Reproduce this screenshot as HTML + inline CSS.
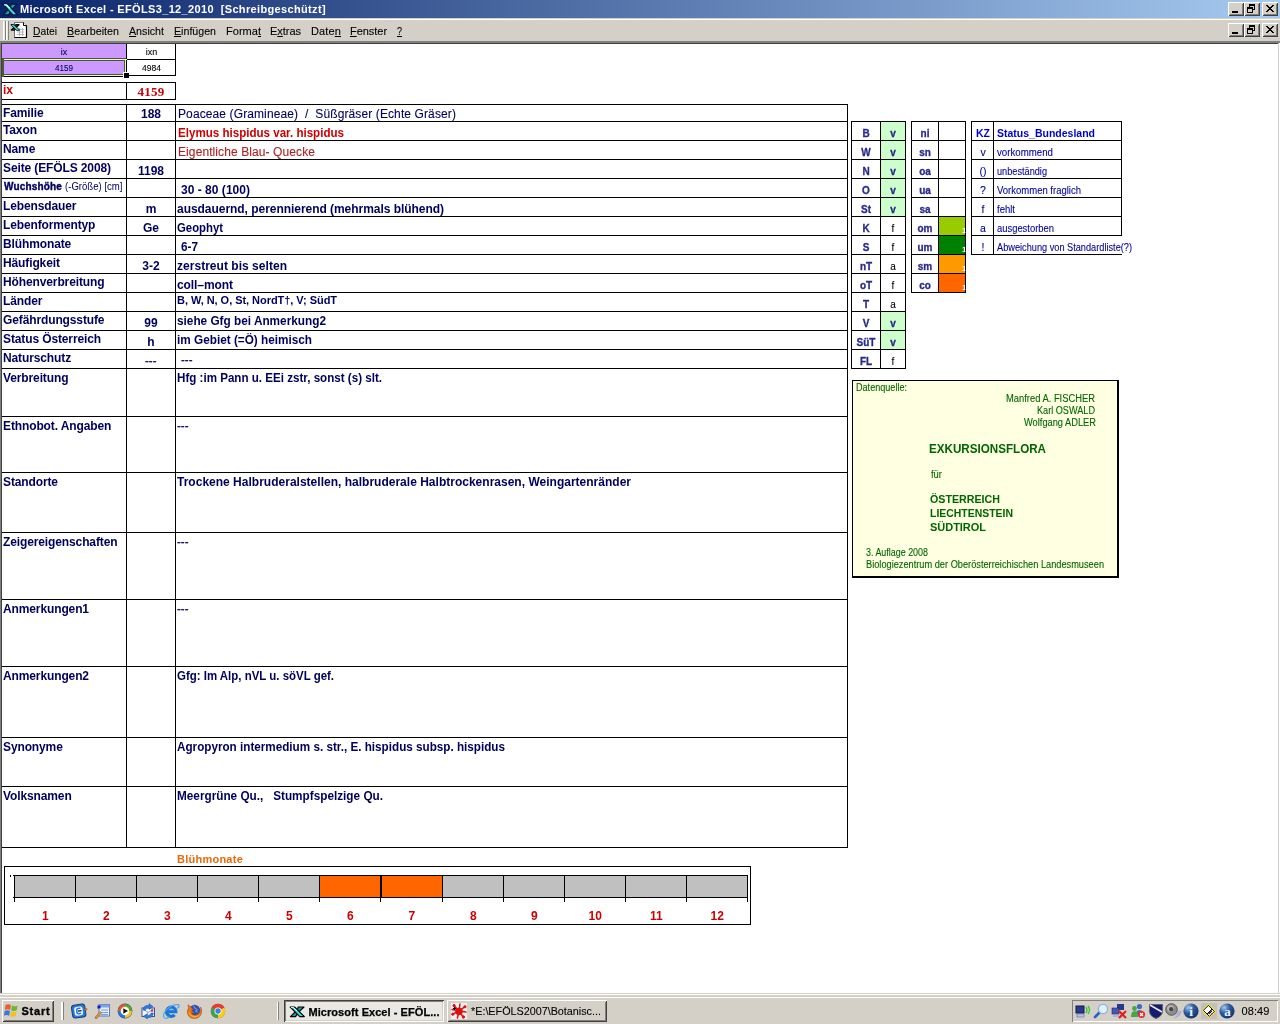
<!DOCTYPE html>
<html><head><meta charset="utf-8"><title>Microsoft Excel - EFÖLS3_12_2010 [Schreibgeschützt]</title>
<style>
html,body{margin:0;padding:0;}
body{width:1280px;height:1024px;position:relative;overflow:hidden;background:#fff;font-family:'Liberation Sans',sans-serif;}
body div,body span,body svg{position:absolute;}
body span{white-space:pre;line-height:normal;}
u{text-decoration:underline;text-underline-offset:1px;}
#tx{left:0;top:0;width:1280px;height:1024px;will-change:transform;}
</style></head><body>
<div style="left:0px;top:0px;width:1280px;height:18px;background:#0a246a;background:linear-gradient(90deg,#0a246a 0%,#a6caf0 100%);"></div>
<div style="left:0px;top:18px;width:1280px;height:1px;background:#d4d0c8;"></div>
<svg style="left:2px;top:2px" width="17" height="15" viewBox="0 0 17 13.6" preserveAspectRatio="none"><path d="M9.2 2 H15 L10.2 6.6 L8.4 4.6 Z M1.4 11.6 L6.2 6.9 L8.3 9 L6.6 11.6 Z" fill="#239a9a" stroke="#041a3c" stroke-width="1.1" stroke-linejoin="round"/><path d="M1.2 2 H5.6 L15.4 11.6 H10.8 Z" fill="#3fe0e0" stroke="#041a3c" stroke-width="1.1" stroke-linejoin="round"/><path d="M2 2.6 H4.6 L8 5.8" stroke="#e8ffff" stroke-width="1" fill="none"/></svg>
<div style="left:1228px;top:2px;width:16px;height:14px;background:#d4d0c8;box-shadow:inset 1px 1px 0 #fff,inset -1px -1px 0 #404040,inset 2px 2px 0 #d4d0c8,inset -2px -2px 0 #808080;"></div>
<div style="left:1232px;top:11px;width:6px;height:2px;background:#000;"></div>
<div style="left:1244px;top:2px;width:16px;height:14px;background:#d4d0c8;box-shadow:inset 1px 1px 0 #fff,inset -1px -1px 0 #404040,inset 2px 2px 0 #d4d0c8,inset -2px -2px 0 #808080;"></div>
<div style="left:1249px;top:4px;width:6px;height:6px;background:transparent;border:1px solid #000;border-top-width:2px;box-sizing:border-box;"></div>
<div style="left:1247px;top:7px;width:6px;height:6px;background:#d4d0c8;border:1px solid #000;border-top-width:2px;box-sizing:border-box;"></div>
<div style="left:1262px;top:2px;width:16px;height:14px;background:#d4d0c8;box-shadow:inset 1px 1px 0 #fff,inset -1px -1px 0 #404040,inset 2px 2px 0 #d4d0c8,inset -2px -2px 0 #808080;"></div>
<svg style="left:1266px;top:5px" width="8" height="7" viewBox="0 0 8 7" shape-rendering="crispEdges"><path d="M0 0h2v1h1v1h2v-1h1v-1h2v1h-1v1h-1v1h-1v1h1v1h1v1h1v1h-2v-1h-1v-1h-2v1h-1v1h-2v-1h1v-1h1v-1h1v-1h-1v-1h-1v-1h-1z" fill="#000"/></svg>
<div style="left:0px;top:19px;width:1280px;height:22px;background:#d4d0c8;"></div>
<div style="left:0px;top:19px;width:1280px;height:1px;background:#fff;"></div>
<div style="left:0px;top:41px;width:1280px;height:1px;background:#808080;"></div>
<div style="left:0px;top:42px;width:1280px;height:1px;background:#808080;"></div>
<div style="left:3px;top:21px;width:1px;height:19px;background:#fff;"></div>
<div style="left:4px;top:21px;width:1px;height:19px;background:#ece9e2;"></div>
<div style="left:5px;top:21px;width:1px;height:19px;background:#808080;"></div>
<div style="left:6px;top:21px;width:1px;height:19px;background:#fff;"></div>
<div style="left:7px;top:21px;width:1px;height:19px;background:#ece9e2;"></div>
<div style="left:8px;top:21px;width:1px;height:19px;background:#808080;"></div>
<svg style="left:10px;top:21px" width="18" height="18" viewBox="0 0 18 18"><path d="M4.5 1.5 H13.5 L16.5 4.5 V16.5 H4.5 Z" fill="#fff" stroke="#707070" stroke-width="1"/><path d="M16.5 4.5 V16.5 H4.5" fill="none" stroke="#000" stroke-width="1.2"/><path d="M13.5 1.5 V4.5 H16.5" fill="#fff" stroke="#000" stroke-width="1"/><path d="M7 8.5h7M7 11h7M7 13.5h7M9.5 7v8M12.5 7v8" stroke="#b4b4b4" stroke-width="1"/><g transform="translate(0.6,2.6) scale(0.56)"><path d="M9.2 2 H15 L10.2 6.6 L8.4 4.6 Z M1.4 11.6 L6.2 6.9 L8.3 9 L6.6 11.6 Z" fill="#239a9a" stroke="#000" stroke-width="2.4" stroke-linejoin="round"/><path d="M1.2 2 H5 L15.2 11.6 H11 Z" fill="#3fe0e0" stroke="#000" stroke-width="2.4" stroke-linejoin="round"/><path d="M1.2 2 H5 L15.2 11.6 H11 Z" fill="#3fe0e0"/></g></svg>
<div style="left:1228px;top:23px;width:16px;height:14px;background:#d4d0c8;box-shadow:inset 1px 1px 0 #fff,inset -1px -1px 0 #404040,inset 2px 2px 0 #d4d0c8,inset -2px -2px 0 #808080;"></div>
<div style="left:1232px;top:32px;width:6px;height:2px;background:#000;"></div>
<div style="left:1244px;top:23px;width:16px;height:14px;background:#d4d0c8;box-shadow:inset 1px 1px 0 #fff,inset -1px -1px 0 #404040,inset 2px 2px 0 #d4d0c8,inset -2px -2px 0 #808080;"></div>
<div style="left:1249px;top:25px;width:6px;height:6px;background:transparent;border:1px solid #000;border-top-width:2px;box-sizing:border-box;"></div>
<div style="left:1247px;top:28px;width:6px;height:6px;background:#d4d0c8;border:1px solid #000;border-top-width:2px;box-sizing:border-box;"></div>
<div style="left:1262px;top:23px;width:16px;height:14px;background:#d4d0c8;box-shadow:inset 1px 1px 0 #fff,inset -1px -1px 0 #404040,inset 2px 2px 0 #d4d0c8,inset -2px -2px 0 #808080;"></div>
<svg style="left:1266px;top:26px" width="8" height="7" viewBox="0 0 8 7" shape-rendering="crispEdges"><path d="M0 0h2v1h1v1h2v-1h1v-1h2v1h-1v1h-1v1h-1v1h1v1h1v1h1v1h-2v-1h-1v-1h-2v1h-1v1h-2v-1h1v-1h1v-1h1v-1h-1v-1h-1v-1h-1z" fill="#000"/></svg>
<div style="left:0px;top:43px;width:1280px;height:950px;background:#fff;"></div>
<div style="left:0px;top:43px;width:1280px;height:1px;background:#404040;"></div>
<div style="left:0px;top:43px;width:1px;height:950px;background:#808080;"></div>
<div style="left:1px;top:44px;width:1px;height:949px;background:#404040;"></div>
<div style="left:1278px;top:43px;width:1px;height:950px;background:#d4d0c8;"></div>
<div style="left:1279px;top:43px;width:1px;height:950px;background:#fff;"></div>
<div style="left:2px;top:44px;width:124px;height:15px;background:#cc99ff;"></div>
<div style="left:2px;top:60px;width:124px;height:15px;background:#cc99ff;"></div>
<div style="left:2px;top:59px;width:174px;height:1px;background:#000;"></div>
<div style="left:2px;top:75px;width:174px;height:1px;background:#000;"></div>
<div style="left:126px;top:44px;width:1px;height:32px;background:#000;"></div>
<div style="left:175px;top:44px;width:1px;height:32px;background:#000;"></div>
<div style="left:2px;top:58px;width:124px;height:1px;background:#4a5a38;"></div>
<div style="left:2px;top:59px;width:125px;height:1px;background:#eef4d6;"></div>
<div style="left:2px;top:60px;width:123px;height:1px;background:#4a5a38;"></div>
<div style="left:2px;top:74px;width:122px;height:1px;background:#4a5a38;"></div>
<div style="left:2px;top:75px;width:122px;height:1px;background:#eef4d6;"></div>
<div style="left:2px;top:76px;width:122px;height:1px;background:#000;"></div>
<div style="left:2px;top:58px;width:2px;height:19px;background:#4a5a38;"></div>
<div style="left:124px;top:60px;width:1px;height:13px;background:#4a5a38;"></div>
<div style="left:125px;top:60px;width:1px;height:13px;background:#eef4d6;"></div>
<div style="left:123px;top:72px;width:6px;height:6px;background:#fff;"></div>
<div style="left:124px;top:73px;width:5px;height:5px;background:#000;"></div>
<div style="left:2px;top:82px;width:174px;height:1px;background:#000;"></div>
<div style="left:2px;top:99px;width:174px;height:1px;background:#000;"></div>
<div style="left:126px;top:82px;width:1px;height:18px;background:#000;"></div>
<div style="left:175px;top:82px;width:1px;height:18px;background:#000;"></div>
<div style="left:2px;top:104px;width:846px;height:1px;background:#000;"></div>
<div style="left:2px;top:121px;width:846px;height:1px;background:#000;"></div>
<div style="left:2px;top:140px;width:846px;height:1px;background:#000;"></div>
<div style="left:2px;top:159px;width:846px;height:1px;background:#000;"></div>
<div style="left:2px;top:178px;width:846px;height:1px;background:#000;"></div>
<div style="left:2px;top:197px;width:846px;height:1px;background:#000;"></div>
<div style="left:2px;top:216px;width:846px;height:1px;background:#000;"></div>
<div style="left:2px;top:235px;width:846px;height:1px;background:#000;"></div>
<div style="left:2px;top:254px;width:846px;height:1px;background:#000;"></div>
<div style="left:2px;top:273px;width:846px;height:1px;background:#000;"></div>
<div style="left:2px;top:292px;width:846px;height:1px;background:#000;"></div>
<div style="left:2px;top:311px;width:846px;height:1px;background:#000;"></div>
<div style="left:2px;top:330px;width:846px;height:1px;background:#000;"></div>
<div style="left:2px;top:349px;width:846px;height:1px;background:#000;"></div>
<div style="left:2px;top:368px;width:846px;height:1px;background:#000;"></div>
<div style="left:2px;top:416px;width:846px;height:1px;background:#000;"></div>
<div style="left:2px;top:472px;width:846px;height:1px;background:#000;"></div>
<div style="left:2px;top:532px;width:846px;height:1px;background:#000;"></div>
<div style="left:2px;top:599px;width:846px;height:1px;background:#000;"></div>
<div style="left:2px;top:666px;width:846px;height:1px;background:#000;"></div>
<div style="left:2px;top:737px;width:846px;height:1px;background:#000;"></div>
<div style="left:2px;top:786px;width:846px;height:1px;background:#000;"></div>
<div style="left:2px;top:847px;width:846px;height:1px;background:#000;"></div>
<div style="left:126px;top:104px;width:1px;height:744px;background:#000;"></div>
<div style="left:175px;top:104px;width:1px;height:744px;background:#000;"></div>
<div style="left:847px;top:104px;width:1px;height:744px;background:#000;"></div>
<div style="left:851px;top:121px;width:55px;height:1px;background:#000;"></div>
<div style="left:851px;top:140px;width:55px;height:1px;background:#000;"></div>
<div style="left:851px;top:159px;width:55px;height:1px;background:#000;"></div>
<div style="left:851px;top:178px;width:55px;height:1px;background:#000;"></div>
<div style="left:851px;top:197px;width:55px;height:1px;background:#000;"></div>
<div style="left:851px;top:216px;width:55px;height:1px;background:#000;"></div>
<div style="left:851px;top:235px;width:55px;height:1px;background:#000;"></div>
<div style="left:851px;top:254px;width:55px;height:1px;background:#000;"></div>
<div style="left:851px;top:273px;width:55px;height:1px;background:#000;"></div>
<div style="left:851px;top:292px;width:55px;height:1px;background:#000;"></div>
<div style="left:851px;top:311px;width:55px;height:1px;background:#000;"></div>
<div style="left:851px;top:330px;width:55px;height:1px;background:#000;"></div>
<div style="left:851px;top:349px;width:55px;height:1px;background:#000;"></div>
<div style="left:851px;top:368px;width:55px;height:1px;background:#000;"></div>
<div style="left:851px;top:121px;width:1px;height:248px;background:#000;"></div>
<div style="left:880px;top:121px;width:1px;height:248px;background:#000;"></div>
<div style="left:905px;top:121px;width:1px;height:248px;background:#000;"></div>
<div style="left:881px;top:122px;width:24px;height:18px;background:#ccffcc;"></div>
<div style="left:881px;top:141px;width:24px;height:18px;background:#ccffcc;"></div>
<div style="left:881px;top:160px;width:24px;height:18px;background:#ccffcc;"></div>
<div style="left:881px;top:179px;width:24px;height:18px;background:#ccffcc;"></div>
<div style="left:881px;top:198px;width:24px;height:18px;background:#ccffcc;"></div>
<div style="left:881px;top:312px;width:24px;height:18px;background:#ccffcc;"></div>
<div style="left:881px;top:331px;width:24px;height:18px;background:#ccffcc;"></div>
<div style="left:911px;top:121px;width:55px;height:1px;background:#000;"></div>
<div style="left:911px;top:140px;width:55px;height:1px;background:#000;"></div>
<div style="left:911px;top:159px;width:55px;height:1px;background:#000;"></div>
<div style="left:911px;top:178px;width:55px;height:1px;background:#000;"></div>
<div style="left:911px;top:197px;width:55px;height:1px;background:#000;"></div>
<div style="left:911px;top:216px;width:55px;height:1px;background:#000;"></div>
<div style="left:911px;top:235px;width:55px;height:1px;background:#000;"></div>
<div style="left:911px;top:254px;width:55px;height:1px;background:#000;"></div>
<div style="left:911px;top:273px;width:55px;height:1px;background:#000;"></div>
<div style="left:911px;top:292px;width:55px;height:1px;background:#000;"></div>
<div style="left:911px;top:121px;width:1px;height:172px;background:#000;"></div>
<div style="left:938px;top:121px;width:1px;height:172px;background:#000;"></div>
<div style="left:965px;top:121px;width:1px;height:172px;background:#000;"></div>
<div style="left:939px;top:217px;width:26px;height:18px;background:#99cc00;"></div>
<div style="left:939px;top:236px;width:26px;height:18px;background:#008000;"></div>
<div style="left:939px;top:255px;width:26px;height:18px;background:#ff9900;"></div>
<div style="left:939px;top:274px;width:26px;height:18px;background:#ff6600;"></div>
<div style="left:971px;top:121px;width:151px;height:1px;background:#000;"></div>
<div style="left:971px;top:140px;width:151px;height:1px;background:#000;"></div>
<div style="left:971px;top:159px;width:151px;height:1px;background:#000;"></div>
<div style="left:971px;top:178px;width:151px;height:1px;background:#000;"></div>
<div style="left:971px;top:197px;width:151px;height:1px;background:#000;"></div>
<div style="left:971px;top:216px;width:151px;height:1px;background:#000;"></div>
<div style="left:971px;top:235px;width:151px;height:1px;background:#000;"></div>
<div style="left:971px;top:254px;width:151px;height:1px;background:#000;"></div>
<div style="left:971px;top:121px;width:1px;height:134px;background:#000;"></div>
<div style="left:993px;top:121px;width:1px;height:134px;background:#000;"></div>
<div style="left:1121px;top:121px;width:1px;height:115px;background:#000;"></div>
<div style="left:852px;top:380px;width:267px;height:198px;background:#ffffe1;border:1px solid #000;border-right-width:2px;border-bottom-width:2px;box-sizing:border-box;"></div>
<div style="left:4px;top:866px;width:747px;height:59px;background:#fff;border:1px solid #000;box-sizing:border-box;"></div>
<div style="left:14px;top:875px;width:61px;height:23px;background:#c0c0c0;"></div>
<div style="left:75px;top:875px;width:61px;height:23px;background:#c0c0c0;"></div>
<div style="left:136px;top:875px;width:61px;height:23px;background:#c0c0c0;"></div>
<div style="left:197px;top:875px;width:61px;height:23px;background:#c0c0c0;"></div>
<div style="left:258px;top:875px;width:61px;height:23px;background:#c0c0c0;"></div>
<div style="left:319px;top:875px;width:61px;height:23px;background:#ff6600;"></div>
<div style="left:380px;top:875px;width:62px;height:23px;background:#ff6600;"></div>
<div style="left:442px;top:875px;width:61px;height:23px;background:#c0c0c0;"></div>
<div style="left:503px;top:875px;width:61px;height:23px;background:#c0c0c0;"></div>
<div style="left:564px;top:875px;width:61px;height:23px;background:#c0c0c0;"></div>
<div style="left:625px;top:875px;width:61px;height:23px;background:#c0c0c0;"></div>
<div style="left:686px;top:875px;width:61px;height:23px;background:#c0c0c0;"></div>
<div style="left:13px;top:875px;width:735px;height:1px;background:#000;"></div>
<div style="left:13px;top:897px;width:735px;height:1px;background:#000;"></div>
<div style="left:14px;top:875px;width:1px;height:27px;background:#000;"></div>
<div style="left:75px;top:875px;width:1px;height:27px;background:#000;"></div>
<div style="left:136px;top:875px;width:1px;height:27px;background:#000;"></div>
<div style="left:197px;top:875px;width:1px;height:27px;background:#000;"></div>
<div style="left:258px;top:875px;width:1px;height:27px;background:#000;"></div>
<div style="left:319px;top:875px;width:1px;height:27px;background:#000;"></div>
<div style="left:380px;top:875px;width:1px;height:27px;background:#000;"></div>
<div style="left:442px;top:875px;width:1px;height:27px;background:#000;"></div>
<div style="left:503px;top:875px;width:1px;height:27px;background:#000;"></div>
<div style="left:564px;top:875px;width:1px;height:27px;background:#000;"></div>
<div style="left:625px;top:875px;width:1px;height:27px;background:#000;"></div>
<div style="left:686px;top:875px;width:1px;height:27px;background:#000;"></div>
<div style="left:747px;top:875px;width:1px;height:27px;background:#000;"></div>
<div style="left:10px;top:875px;width:1px;height:2px;background:#000;"></div>
<div style="left:381px;top:875px;width:1px;height:23px;background:#000;"></div>
<div style="left:442px;top:875px;width:1px;height:23px;background:#000;"></div>
<div style="left:0px;top:993px;width:1280px;height:31px;background:#d4d0c8;"></div>
<div style="left:0px;top:994px;width:1280px;height:1px;background:#fff;"></div>
<div style="left:0px;top:997px;width:1280px;height:1px;background:#fff;"></div>
<div style="left:2px;top:1000px;width:52px;height:22px;background:#d4d0c8;box-shadow:inset 1px 1px 0 #fff,inset -1px -1px 0 #404040,inset 2px 2px 0 #d4d0c8,inset -2px -2px 0 #808080;"></div>
<svg style="left:4px;top:1002px" width="16" height="16" viewBox="0 0 16 16"><path d="M1.5 3.2 Q4 1.5 7 3.2 L6.2 8 Q3.6 6.6 0.8 8 Z" fill="#e8602c"/><path d="M8 3.6 Q10.6 5 13.6 3.4 L12.8 8.2 Q10 9.6 7.2 8.4 Z" fill="#6cb82c"/><path d="M0.6 9 Q3.4 7.6 6 9 L5.2 13.8 Q2.6 12.4 0 13.8 Z" fill="#3c78d8"/><path d="M7 9.4 Q9.8 10.6 12.6 9.2 L11.8 14 Q9 15.4 6.2 14.2 Z" fill="#f4c020"/></svg>
<div style="left:61px;top:1002px;width:2px;height:18px;background:#fff;"></div>
<div style="left:63px;top:1002px;width:1px;height:18px;background:#808080;"></div>
<svg style="left:71px;top:1003px" width="17" height="16" viewBox="0 0 17 16"><g transform="rotate(-8 8 8)"><rect x="1" y="1.5" width="13.4" height="13" rx="2.8" fill="#2a78d0" stroke="#0c3c94" stroke-width="1"/><rect x="3.4" y="3.6" width="8.4" height="8.8" rx="2.2" fill="#eaf4ff"/><path d="M9.8 5.4 H7.4 Q5.8 5.4 5.8 7 V9 Q5.8 10.6 7.4 10.6 H9.8" stroke="#2a78d0" stroke-width="1.5" fill="none"/><path d="M7 8 H10.6" stroke="#101830" stroke-width="1.3"/></g><circle cx="15" cy="6.2" r="1.3" fill="#d8601c"/></svg>
<svg style="left:94px;top:1003px" width="17" height="16" viewBox="0 0 17 16"><rect x="5" y="1.5" width="10.5" height="11.5" fill="#e8f0fc" stroke="#5878c0"/><rect x="5" y="1.5" width="10.5" height="3" fill="#7ca4e4"/><rect x="3.5" y="2.5" width="3" height="3" fill="#1418b8"/><path d="M7 7h7M7 9.5h7M7 11.5h7" stroke="#7898d8"/><path d="M1 14.5 L6 8.5 L7.6 9.8 L2.6 15.6z" fill="#e8963c" stroke="#a05818" stroke-width=".6"/><path d="M.6 15.8 L1.6 13.8 L3 15z" fill="#807060"/></svg>
<svg style="left:117px;top:1003px" width="17" height="16" viewBox="0 0 17 16"><circle cx="8" cy="8" r="7.4" fill="#1c4c9c"/><path d="M8 8 L8 .9 A7.1 7.1 0 0 0 .9 8z" fill="#e85c20"/><path d="M8 8 L15.1 8 A7.1 7.1 0 0 0 8 .9z" fill="#58a828"/><path d="M8 8 L8 15.1 A7.1 7.1 0 0 0 15.1 8z" fill="#f0c418"/><path d="M8 8 L.9 8 A7.1 7.1 0 0 0 8 15.1z" fill="#2c74d8"/><circle cx="8" cy="8" r="4.3" fill="#fff"/><path d="M6.3 5.2 L11 8 L6.3 10.8z" fill="#101010"/></svg>
<svg style="left:140px;top:1003px" width="17" height="16" viewBox="0 0 17 16"><rect x="2" y="5" width="12.5" height="8.5" fill="#f4f6fc" stroke="#3450a0" stroke-width="1"/><path d="M2 5 l6.2 4.6 6.3-4.6" stroke="#8094c8" fill="none"/><rect x="11" y="6.5" width="2.2" height="2.2" fill="#d83020"/><path d="M3 7 Q3.5 2 9 2.4 L9 .6 L13 3.6 L9 6.4 L9 4.6 Q5.5 4.4 5.4 7.4z" fill="#2c7ce0" stroke="#1c4ca8" stroke-width=".5"/><path d="M13.4 10 Q13 15 7.4 14.6 L7.4 16 L3.4 13.2 L7.4 10.6 L7.4 12.4 Q10.8 12.6 11 10z" fill="#2c7ce0" stroke="#1c4ca8" stroke-width=".5"/></svg>
<svg style="left:163px;top:1003px" width="17" height="16" viewBox="0 0 17 16"><path d="M4.4 8.6 H12.8 A4.6 4.6 0 1 0 11.6 11.8" stroke="#1c74d4" stroke-width="3.3" fill="none"/><path d="M5 7.4 H12 A4 4 0 0 0 5 7.4" fill="#58b4f8" opacity=".55"/><path d="M1.2 14.6 C-1.5 10 7 1 15.6 1.6 C17 3 15 5 14 5.4" stroke="#4ca8f0" stroke-width="1.2" fill="none"/><path d="M1.2 14.6 C3 16 5.6 14.6 6.6 13.8" stroke="#4ca8f0" stroke-width="1.2" fill="none"/></svg>
<svg style="left:186px;top:1003px" width="17" height="16" viewBox="0 0 17 16"><circle cx="8.6" cy="7.4" r="5.6" fill="#3050b4"/><path d="M7 3 q2 .5 2 2.5 q1.6 0 2.4 1.4 l-2 1 q.5 1.5 2.4 1" stroke="#80a8e8" stroke-width="1" fill="none"/><path d="M2.2 1.6 Q1.8 3.6 2.6 4.8 Q.4 8 1.8 11.4 Q3.6 15.6 8.4 15.6 Q13.8 15.4 15.4 10.4 Q16.4 6.6 14.6 4 Q15.2 7.4 13.6 9.6 Q12 12.4 8.6 12.2 Q5.6 11.8 5.2 9.4 Q6.6 10.4 8.2 9.4 Q6 8.8 5.6 7 Q6.8 7 7.4 6.2 Q5 5.4 4.6 3.6 Q3.2 3.4 2.2 1.6z" fill="#e8741c" stroke="#b04808" stroke-width=".5"/><path d="M2.6 9 Q3.6 13.6 8.4 14.4 Q12.6 14.4 14.4 10.4 Q12.4 13 8.6 13 Q5 12.8 3.8 9.6z" fill="#f8b428"/></svg>
<svg style="left:209.5px;top:1003px" width="17" height="16" viewBox="0 0 17 16"><circle cx="8" cy="8" r="7.3" fill="#e43c30"/><path d="M8 8 L1.7 4.4 A7.3 7.3 0 0 0 8 15.3 z" fill="#3ca44c"/><path d="M8 8 L8 15.3 A7.3 7.3 0 0 0 14.3 4.4 z" fill="#f8cc1c"/><path d="M8 4.4 H14.3 A7.3 7.3 0 0 0 1.7 4.4z" fill="#e43c30"/><circle cx="8" cy="8" r="3.5" fill="#fff"/><circle cx="8" cy="8" r="2.7" fill="#3c80e4"/></svg>
<div style="left:277px;top:1002px;width:1px;height:18px;background:#fff;"></div>
<div style="left:278px;top:1002px;width:1px;height:18px;background:#808080;"></div>
<div style="left:284px;top:1000px;width:160px;height:22px;background:#eae8e3;box-shadow:inset 1px 1px 0 #404040,inset -1px -1px 0 #fff,inset 2px 2px 0 #808080,inset -2px -2px 0 #d4d0c8;"></div>
<svg style="left:289px;top:1005px" width="17" height="14" viewBox="0 0 17 14"><path d="M9.2 2 H15 L10.2 6.6 L8.4 4.6 Z M1.4 11.6 L6.2 6.9 L8.3 9 L6.6 11.6 Z" fill="#239a9a" stroke="#000" stroke-width="1.1" stroke-linejoin="round"/><path d="M1.2 2 H5.6 L15.4 11.6 H10.8 Z" fill="#3fe0e0" stroke="#000" stroke-width="1.1" stroke-linejoin="round"/><path d="M2 2.6 H4.6 L8 5.8" stroke="#e8ffff" stroke-width="1" fill="none"/></svg>
<div style="left:447px;top:1000px;width:160px;height:22px;background:#d4d0c8;box-shadow:inset 1px 1px 0 #fff,inset -1px -1px 0 #404040,inset 2px 2px 0 #d4d0c8,inset -2px -2px 0 #808080;"></div>
<svg style="left:451px;top:1003px" width="16" height="16" viewBox="0 0 16 16"><rect width="16" height="16" fill="#f0f0f0"/><g fill="#e01010" stroke="#e01010"><circle cx="8" cy="8.4" r="3.4"/><path d="M8 8 L3 2.4 M8 8 L9 1 M8 8 L14 3.6 M8 8 L15 9 M8 8 L12.4 14.4 M8 8 L6.4 15 M8 8 L1.4 11.4 M8 8 L1 6.4" stroke-width="1.5" stroke-linecap="round"/><circle cx="3" cy="2.6" r="1.1"/><circle cx="14" cy="3.8" r="1.1"/><circle cx="12.4" cy="14" r="1.2"/><circle cx="1.8" cy="11.2" r="1.1"/></g><rect x="3" y="4" width="1" height="3" fill="#000"/><rect x="2" y="5" width="3" height="1" fill="#000"/></svg>
<div style="left:1072px;top:1000px;width:206px;height:22px;background:#d4d0c8;box-shadow:inset 1px 1px 0 #808080,inset -1px -1px 0 #fff;"></div>
<svg style="left:1075px;top:1003px" width="17" height="16" viewBox="0 0 17 16"><rect x="1" y="3" width="8" height="7" fill="#28388c" stroke="#101848"/><rect x="2" y="11" width="7" height="3" fill="#b8c4ec" stroke="#5868a8" stroke-width=".6"/><path d="M11 4 q2 3 0 6 M13 3 q3 4 0 8" stroke="#38c828" stroke-width="1.3" fill="none"/></svg>
<svg style="left:1093px;top:1003px" width="16" height="16" viewBox="0 0 16 16"><path d="M2 14 L7 9" stroke="#2c5cc8" stroke-width="2.6" stroke-linecap="round"/><circle cx="10" cy="6" r="4.6" fill="#e4f0fc" stroke="#8cb4e8" stroke-width="1.4"/></svg>
<svg style="left:1111px;top:1003px" width="16" height="16" viewBox="0 0 16 16"><rect x="6" y="1" width="7" height="6" fill="#28388c"/><rect x="1" y="5" width="7" height="6" fill="#4858b0" stroke="#182868" stroke-width=".6"/><rect x="2" y="12" width="6" height="2" fill="#a8b4e0"/><path d="M8 8 L15 15 M15 8 L8 15" stroke="#e02020" stroke-width="2.2"/></svg>
<svg style="left:1130px;top:1003px" width="16" height="16" viewBox="0 0 16 16"><circle cx="9.5" cy="3.5" r="2.6" fill="#3c6cc0"/><path d="M5.5 13 q0-6 4-6 q4 0 4 6z" fill="#3c6cc0"/><circle cx="4.5" cy="5.5" r="2.4" fill="#48a848"/><path d="M1 14 q0-6 3.6-6 q3.6 0 3.6 6z" fill="#48a848"/><circle cx="11.5" cy="11.5" r="3.6" fill="#e02828"/><path d="M10 10 l3 3 M13 10 l-3 3" stroke="#fff" stroke-width="1.3"/></svg>
<svg style="left:1148px;top:1003px" width="16" height="16" viewBox="0 0 16 16"><path d="M1.5 1.5 H14.5 V8 Q14.5 13 8 15.5 Q1.5 13 1.5 8z" fill="#141c70" stroke="#606060"/><path d="M2 2 L14 9" stroke="#e8e8f4" stroke-width="1.6"/></svg>
<svg style="left:1165px;top:1003px" width="17" height="16" viewBox="0 0 17 16"><circle cx="6.5" cy="6.5" r="5.8" fill="#8c8c8c" stroke="#585858"/><circle cx="5.6" cy="5.6" r="3.4" fill="#b8b8b8"/><circle cx="6.2" cy="6.2" r="2.2" fill="#484848"/><path d="M10.5 12.5 q3-1.4 4-4.6 M9 15 q5.4-1.4 7-7" stroke="#a8a8dc" stroke-width="1.2" fill="none"/></svg>
<svg style="left:1183px;top:1003px" width="16" height="16" viewBox="0 0 16 16"><defs><radialGradient id="gi" cx=".32" cy=".28" r=".8"><stop offset="0" stop-color="#a8c8ec"/><stop offset=".45" stop-color="#2c5c9c"/><stop offset="1" stop-color="#10306c"/></radialGradient></defs><circle cx="8" cy="8" r="7.6" fill="url(#gi)"/><text x="8.2" y="13" text-anchor="middle" font-family="Liberation Serif" font-weight="bold" font-size="13.5" fill="#e8f4ff">i</text></svg>
<svg style="left:1201px;top:1003px" width="16" height="16" viewBox="0 0 16 16"><rect width="16" height="16" fill="#c4c0b8"/><path d="M.8 7.4 L7.6 .8 L15.2 8.4 L8.4 15.2z" fill="#f4ec28"/><path d="M2.4 7.4 L7.4 2.4 L11 6 L6 11z" fill="#fff" stroke="#000" stroke-width=".9"/><path d="M6 11 L11 6 L13.4 8.4 L8.4 13.4z" fill="#fff" stroke="#000" stroke-width=".9"/><path d="M7.6 11 L11 7.6" stroke="#000" stroke-width="1.2"/><rect x="10" y="10.4" width="1.4" height="1.4" fill="#e03030"/></svg>
<svg style="left:1219px;top:1003px" width="16" height="16" viewBox="0 0 16 16"><defs><radialGradient id="ga" cx=".32" cy=".28" r=".8"><stop offset="0" stop-color="#a8c8ec"/><stop offset=".45" stop-color="#2c5c9c"/><stop offset="1" stop-color="#10306c"/></radialGradient></defs><circle cx="8" cy="8" r="7.6" fill="url(#ga)"/><text x="8.6" y="12.6" text-anchor="middle" font-family="Liberation Serif" font-weight="bold" font-size="13" fill="#e8f4ff">a</text></svg>
<div id="tx">
<span style="left:20.00px;top:3.00px;color:#fff;font:bold 11px 'Liberation Sans',sans-serif;letter-spacing:0.347px;">Microsoft Excel - EFÖLS3_12_2010  [Schreibgeschützt]</span>
<span style="left:33.00px;top:25.00px;color:#000;font:11px 'Liberation Sans',sans-serif;-webkit-text-stroke:0.1px #000;transform:scaleX(0.9343);transform-origin:0 0;"><u>D</u>atei</span>
<span style="left:67.00px;top:25.00px;color:#000;font:11px 'Liberation Sans',sans-serif;-webkit-text-stroke:0.1px #000;transform:scaleX(0.9771);transform-origin:0 0;"><u>B</u>earbeiten</span>
<span style="left:129.00px;top:25.00px;color:#000;font:11px 'Liberation Sans',sans-serif;-webkit-text-stroke:0.1px #000;transform:scaleX(0.9701);transform-origin:0 0;"><u>A</u>nsicht</span>
<span style="left:174.00px;top:25.00px;color:#000;font:11px 'Liberation Sans',sans-serif;-webkit-text-stroke:0.1px #000;transform:scaleX(0.9669);transform-origin:0 0;"><u>E</u>infügen</span>
<span style="left:226.00px;top:25.00px;color:#000;font:11px 'Liberation Sans',sans-serif;letter-spacing:0.026px;-webkit-text-stroke:0.1px #000;">Forma<u>t</u></span>
<span style="left:270.00px;top:25.00px;color:#000;font:11px 'Liberation Sans',sans-serif;letter-spacing:-0.031px;-webkit-text-stroke:0.1px #000;">E<u>x</u>tras</span>
<span style="left:311.00px;top:25.00px;color:#000;font:11px 'Liberation Sans',sans-serif;letter-spacing:0.128px;-webkit-text-stroke:0.1px #000;">Date<u>n</u></span>
<span style="left:350.00px;top:25.00px;color:#000;font:11px 'Liberation Sans',sans-serif;letter-spacing:-0.042px;-webkit-text-stroke:0.1px #000;"><u>F</u>enster</span>
<span style="left:397.00px;top:25.00px;color:#000;font:11px 'Liberation Sans',sans-serif;-webkit-text-stroke:0.1px #000;transform:scaleX(0.8163);transform-origin:0 0;"><u>?</u></span>
<span style="left:60.75px;top:47.00px;color:#00005c;font:9px 'Liberation Sans',sans-serif;-webkit-text-stroke:0.1px #00005c;">ix</span>
<span style="left:145.74px;top:47.00px;color:#000;font:9px 'Liberation Sans',sans-serif;-webkit-text-stroke:0.1px #000;">ixn</span>
<span style="left:55.00px;top:63.00px;color:#00005c;font:9px 'Liberation Sans',sans-serif;-webkit-text-stroke:0.1px #00005c;transform:scaleX(0.8986);transform-origin:0 0;">4159</span>
<span style="left:142.00px;top:63.00px;color:#000;font:9px 'Liberation Sans',sans-serif;-webkit-text-stroke:0.1px #000;transform:scaleX(0.9485);transform-origin:0 0;">4984</span>
<span style="left:3.00px;top:83.00px;color:#cc0000;font:bold 12px 'Liberation Sans',sans-serif;">ix</span>
<span style="left:137.62px;top:84.00px;color:#cc0000;font:bold 13px 'Liberation Serif',serif;letter-spacing:0.250px;">4159</span>
<span style="left:3.00px;top:106.00px;color:#00005c;font:bold 12px 'Liberation Sans',sans-serif;letter-spacing:-0.12px;">Familie</span>
<span style="left:3.00px;top:123.00px;color:#00005c;font:bold 12px 'Liberation Sans',sans-serif;letter-spacing:-0.12px;">Taxon</span>
<span style="left:3.00px;top:142.00px;color:#00005c;font:bold 12px 'Liberation Sans',sans-serif;letter-spacing:-0.12px;">Name</span>
<span style="left:3.00px;top:161.00px;color:#00005c;font:bold 12px 'Liberation Sans',sans-serif;letter-spacing:-0.12px;">Seite (EFÖLS 2008)</span>
<span style="left:3.00px;top:199.00px;color:#00005c;font:bold 12px 'Liberation Sans',sans-serif;letter-spacing:-0.12px;">Lebensdauer</span>
<span style="left:3.00px;top:218.00px;color:#00005c;font:bold 12px 'Liberation Sans',sans-serif;letter-spacing:-0.12px;">Lebenformentyp</span>
<span style="left:3.00px;top:237.00px;color:#00005c;font:bold 12px 'Liberation Sans',sans-serif;letter-spacing:-0.12px;">Blühmonate</span>
<span style="left:3.00px;top:256.00px;color:#00005c;font:bold 12px 'Liberation Sans',sans-serif;letter-spacing:-0.12px;">Häufigkeit</span>
<span style="left:3.00px;top:275.00px;color:#00005c;font:bold 12px 'Liberation Sans',sans-serif;letter-spacing:-0.12px;">Höhenverbreitung</span>
<span style="left:3.00px;top:294.00px;color:#00005c;font:bold 12px 'Liberation Sans',sans-serif;letter-spacing:-0.12px;">Länder</span>
<span style="left:3.00px;top:313.00px;color:#00005c;font:bold 12px 'Liberation Sans',sans-serif;letter-spacing:-0.12px;">Gefährdungsstufe</span>
<span style="left:3.00px;top:332.00px;color:#00005c;font:bold 12px 'Liberation Sans',sans-serif;letter-spacing:-0.12px;">Status Österreich</span>
<span style="left:3.00px;top:351.00px;color:#00005c;font:bold 12px 'Liberation Sans',sans-serif;letter-spacing:-0.12px;">Naturschutz</span>
<span style="left:3.00px;top:371.00px;color:#00005c;font:bold 12px 'Liberation Sans',sans-serif;letter-spacing:-0.12px;">Verbreitung</span>
<span style="left:3.00px;top:419.00px;color:#00005c;font:bold 12px 'Liberation Sans',sans-serif;letter-spacing:-0.12px;">Ethnobot. Angaben</span>
<span style="left:3.00px;top:475.00px;color:#00005c;font:bold 12px 'Liberation Sans',sans-serif;letter-spacing:-0.12px;">Standorte</span>
<span style="left:3.00px;top:535.00px;color:#00005c;font:bold 12px 'Liberation Sans',sans-serif;letter-spacing:-0.12px;">Zeigereigenschaften</span>
<span style="left:3.00px;top:602.00px;color:#00005c;font:bold 12px 'Liberation Sans',sans-serif;letter-spacing:-0.12px;">Anmerkungen1</span>
<span style="left:3.00px;top:669.00px;color:#00005c;font:bold 12px 'Liberation Sans',sans-serif;letter-spacing:-0.12px;">Anmerkungen2</span>
<span style="left:3.00px;top:740.00px;color:#00005c;font:bold 12px 'Liberation Sans',sans-serif;letter-spacing:-0.12px;">Synonyme</span>
<span style="left:3.00px;top:789.00px;color:#00005c;font:bold 12px 'Liberation Sans',sans-serif;letter-spacing:-0.12px;">Volksnamen</span>
<span style="left:4.00px;top:181.00px;color:#00005c;font:bold 10px 'Liberation Sans',sans-serif;letter-spacing:0.168px;-webkit-text-stroke:0.4px #00005c;">Wuchshöhe</span>
<span style="left:65.00px;top:181.00px;color:#00005c;font:10px 'Liberation Sans',sans-serif;-webkit-text-stroke:0.01px #00005c;transform:scaleX(0.9583);transform-origin:0 0;">(-Größe) [cm]</span>
<span style="left:140.98px;top:107.00px;color:#00005c;font:bold 12px 'Liberation Sans',sans-serif;">188</span>
<span style="left:137.98px;top:164.00px;color:#00005c;font:bold 12px 'Liberation Sans',sans-serif;">1198</span>
<span style="left:145.66px;top:202.00px;color:#00005c;font:bold 12px 'Liberation Sans',sans-serif;">m</span>
<span style="left:142.99px;top:221.00px;color:#00005c;font:bold 12px 'Liberation Sans',sans-serif;">Ge</span>
<span style="left:142.33px;top:259.00px;color:#00005c;font:bold 12px 'Liberation Sans',sans-serif;">3-2</span>
<span style="left:144.32px;top:316.00px;color:#00005c;font:bold 12px 'Liberation Sans',sans-serif;">99</span>
<span style="left:147.33px;top:335.00px;color:#00005c;font:bold 12px 'Liberation Sans',sans-serif;">h</span>
<span style="left:145.25px;top:354.00px;color:#00005c;font:12px 'Liberation Sans',sans-serif;-webkit-text-stroke:0.15px #00005c;transform:scaleX(0.9583);transform-origin:0 0;">---</span>
<span style="left:178.00px;top:107.00px;color:#00005c;font:12px 'Liberation Sans',sans-serif;letter-spacing:0.109px;-webkit-text-stroke:0.1px #00005c;">Poaceae (Gramineae)  /  Süßgräser (Echte Gräser)</span>
<span style="left:178.00px;top:126.00px;color:#cc0000;font:bold 12px 'Liberation Sans',sans-serif;transform:scaleX(0.9648);transform-origin:0 0;">Elymus hispidus var. hispidus</span>
<span style="left:178.00px;top:145.00px;color:#b02020;font:12px 'Liberation Sans',sans-serif;letter-spacing:0.094px;-webkit-text-stroke:0.1px #b02020;">Eigentliche Blau- Quecke</span>
<span style="left:181.00px;top:183.00px;color:#00005c;font:bold 12px 'Liberation Sans',sans-serif;letter-spacing:0.022px;">30 - 80 (100)</span>
<span style="left:177.00px;top:202.00px;color:#00005c;font:bold 12px 'Liberation Sans',sans-serif;letter-spacing:-0.040px;">ausdauernd, perennierend (mehrmals blühend)</span>
<span style="left:177.00px;top:221.00px;color:#00005c;font:bold 12px 'Liberation Sans',sans-serif;transform:scaleX(0.9451);transform-origin:0 0;">Geophyt</span>
<span style="left:181.00px;top:240.00px;color:#00005c;font:bold 12px 'Liberation Sans',sans-serif;transform:scaleX(0.9802);transform-origin:0 0;">6-7</span>
<span style="left:177.00px;top:259.00px;color:#00005c;font:bold 12px 'Liberation Sans',sans-serif;letter-spacing:0.031px;">zerstreut bis selten</span>
<span style="left:177.00px;top:278.00px;color:#00005c;font:bold 12px 'Liberation Sans',sans-serif;letter-spacing:-0.075px;">coll–mont</span>
<span style="left:177.00px;top:314.00px;color:#00005c;font:bold 12px 'Liberation Sans',sans-serif;transform:scaleX(0.9829);transform-origin:0 0;">siehe Gfg bei Anmerkung2</span>
<span style="left:177.00px;top:333.00px;color:#00005c;font:bold 12px 'Liberation Sans',sans-serif;transform:scaleX(0.9804);transform-origin:0 0;">im Gebiet (=Ö) heimisch</span>
<span style="left:181.00px;top:353.00px;color:#00005c;font:12px 'Liberation Sans',sans-serif;-webkit-text-stroke:0.15px #00005c;transform:scaleX(0.9583);transform-origin:0 0;">---</span>
<span style="left:177.00px;top:294.00px;color:#00005c;font:bold 11px 'Liberation Sans',sans-serif;letter-spacing:-0.043px;">B, W, N, O, St, NordT†, V; SüdT</span>
<span style="left:177.00px;top:371.00px;color:#00005c;font:bold 12px 'Liberation Sans',sans-serif;transform:scaleX(0.9668);transform-origin:0 0;">Hfg :im Pann u. EEi zstr, sonst (s) slt.</span>
<span style="left:177.00px;top:419.00px;color:#00005c;font:12px 'Liberation Sans',sans-serif;-webkit-text-stroke:0.15px #00005c;transform:scaleX(0.9583);transform-origin:0 0;">---</span>
<span style="left:177.00px;top:475.00px;color:#00005c;font:bold 12px 'Liberation Sans',sans-serif;letter-spacing:0.010px;">Trockene Halbruderalstellen, halbruderale Halbtrockenrasen, Weingartenränder</span>
<span style="left:177.00px;top:535.00px;color:#00005c;font:12px 'Liberation Sans',sans-serif;-webkit-text-stroke:0.15px #00005c;transform:scaleX(0.9583);transform-origin:0 0;">---</span>
<span style="left:177.00px;top:602.00px;color:#00005c;font:12px 'Liberation Sans',sans-serif;-webkit-text-stroke:0.15px #00005c;transform:scaleX(0.9583);transform-origin:0 0;">---</span>
<span style="left:177.00px;top:669.00px;color:#00005c;font:bold 12px 'Liberation Sans',sans-serif;transform:scaleX(0.9547);transform-origin:0 0;">Gfg: Im Alp, nVL u. söVL gef.</span>
<span style="left:177.00px;top:740.00px;color:#00005c;font:bold 12px 'Liberation Sans',sans-serif;transform:scaleX(0.9741);transform-origin:0 0;">Agropyron intermedium s. str., E. hispidus subsp. hispidus</span>
<span style="left:177.00px;top:789.00px;color:#00005c;font:bold 12px 'Liberation Sans',sans-serif;transform:scaleX(0.9808);transform-origin:0 0;">Meergrüne Qu.,   Stumpfspelzige Qu.</span>
<span style="left:862.38px;top:128.00px;color:#2a2a8a;font:bold 10px 'Liberation Sans',sans-serif;-webkit-text-stroke:0.3px #2a2a8a;">B</span>
<span style="left:890.22px;top:128.00px;color:#2a2a8a;font:bold 10px 'Liberation Sans',sans-serif;-webkit-text-stroke:0.3px #2a2a8a;">v</span>
<span style="left:861.27px;top:147.00px;color:#2a2a8a;font:bold 10px 'Liberation Sans',sans-serif;-webkit-text-stroke:0.3px #2a2a8a;">W</span>
<span style="left:890.22px;top:147.00px;color:#2a2a8a;font:bold 10px 'Liberation Sans',sans-serif;-webkit-text-stroke:0.3px #2a2a8a;">v</span>
<span style="left:862.38px;top:166.00px;color:#2a2a8a;font:bold 10px 'Liberation Sans',sans-serif;-webkit-text-stroke:0.3px #2a2a8a;">N</span>
<span style="left:890.22px;top:166.00px;color:#2a2a8a;font:bold 10px 'Liberation Sans',sans-serif;-webkit-text-stroke:0.3px #2a2a8a;">v</span>
<span style="left:862.11px;top:185.00px;color:#2a2a8a;font:bold 10px 'Liberation Sans',sans-serif;-webkit-text-stroke:0.3px #2a2a8a;">O</span>
<span style="left:890.22px;top:185.00px;color:#2a2a8a;font:bold 10px 'Liberation Sans',sans-serif;-webkit-text-stroke:0.3px #2a2a8a;">v</span>
<span style="left:861.00px;top:204.00px;color:#2a2a8a;font:bold 10px 'Liberation Sans',sans-serif;-webkit-text-stroke:0.3px #2a2a8a;">St</span>
<span style="left:890.22px;top:204.00px;color:#2a2a8a;font:bold 10px 'Liberation Sans',sans-serif;-webkit-text-stroke:0.3px #2a2a8a;">v</span>
<span style="left:862.38px;top:223.00px;color:#2a2a8a;font:bold 10px 'Liberation Sans',sans-serif;-webkit-text-stroke:0.3px #2a2a8a;">K</span>
<span style="left:891.61px;top:223.00px;color:#000;font:10px 'Liberation Sans',sans-serif;-webkit-text-stroke:0.1px #000;">f</span>
<span style="left:862.66px;top:242.00px;color:#2a2a8a;font:bold 10px 'Liberation Sans',sans-serif;-webkit-text-stroke:0.3px #2a2a8a;">S</span>
<span style="left:891.61px;top:242.00px;color:#000;font:10px 'Liberation Sans',sans-serif;-webkit-text-stroke:0.1px #000;">f</span>
<span style="left:859.89px;top:261.00px;color:#2a2a8a;font:bold 10px 'Liberation Sans',sans-serif;-webkit-text-stroke:0.3px #2a2a8a;">nT</span>
<span style="left:890.22px;top:261.00px;color:#000;font:10px 'Liberation Sans',sans-serif;-webkit-text-stroke:0.1px #000;">a</span>
<span style="left:859.89px;top:280.00px;color:#2a2a8a;font:bold 10px 'Liberation Sans',sans-serif;-webkit-text-stroke:0.3px #2a2a8a;">oT</span>
<span style="left:891.61px;top:280.00px;color:#000;font:10px 'Liberation Sans',sans-serif;-webkit-text-stroke:0.1px #000;">f</span>
<span style="left:862.95px;top:299.00px;color:#2a2a8a;font:bold 10px 'Liberation Sans',sans-serif;-webkit-text-stroke:0.3px #2a2a8a;">T</span>
<span style="left:890.22px;top:299.00px;color:#000;font:10px 'Liberation Sans',sans-serif;-webkit-text-stroke:0.1px #000;">a</span>
<span style="left:862.66px;top:318.00px;color:#2a2a8a;font:bold 10px 'Liberation Sans',sans-serif;-webkit-text-stroke:0.3px #2a2a8a;">V</span>
<span style="left:890.22px;top:318.00px;color:#2a2a8a;font:bold 10px 'Liberation Sans',sans-serif;-webkit-text-stroke:0.3px #2a2a8a;">v</span>
<span style="left:856.55px;top:337.00px;color:#2a2a8a;font:bold 10px 'Liberation Sans',sans-serif;-webkit-text-stroke:0.3px #2a2a8a;">SüT</span>
<span style="left:890.22px;top:337.00px;color:#2a2a8a;font:bold 10px 'Liberation Sans',sans-serif;-webkit-text-stroke:0.3px #2a2a8a;">v</span>
<span style="left:859.89px;top:356.00px;color:#2a2a8a;font:bold 10px 'Liberation Sans',sans-serif;-webkit-text-stroke:0.3px #2a2a8a;">FL</span>
<span style="left:891.61px;top:356.00px;color:#000;font:10px 'Liberation Sans',sans-serif;-webkit-text-stroke:0.1px #000;">f</span>
<span style="left:920.55px;top:128.00px;color:#2a2a8a;font:bold 10px 'Liberation Sans',sans-serif;-webkit-text-stroke:0.3px #2a2a8a;">ni</span>
<span style="left:919.16px;top:147.00px;color:#2a2a8a;font:bold 10px 'Liberation Sans',sans-serif;-webkit-text-stroke:0.3px #2a2a8a;">sn</span>
<span style="left:919.16px;top:166.00px;color:#2a2a8a;font:bold 10px 'Liberation Sans',sans-serif;-webkit-text-stroke:0.3px #2a2a8a;">oa</span>
<span style="left:919.16px;top:185.00px;color:#2a2a8a;font:bold 10px 'Liberation Sans',sans-serif;-webkit-text-stroke:0.3px #2a2a8a;">ua</span>
<span style="left:919.44px;top:204.00px;color:#2a2a8a;font:bold 10px 'Liberation Sans',sans-serif;-webkit-text-stroke:0.3px #2a2a8a;">sa</span>
<span style="left:962.00px;top:226.00px;color:#fff;font:bold 8px 'Liberation Sans',sans-serif;clip-path:inset(0 1px 0 0);">1</span>
<span style="left:917.50px;top:223.00px;color:#2a2a8a;font:bold 10px 'Liberation Sans',sans-serif;-webkit-text-stroke:0.3px #2a2a8a;">om</span>
<span style="left:962.00px;top:245.00px;color:#fff;font:bold 8px 'Liberation Sans',sans-serif;clip-path:inset(0 1px 0 0);">1</span>
<span style="left:917.50px;top:242.00px;color:#2a2a8a;font:bold 10px 'Liberation Sans',sans-serif;-webkit-text-stroke:0.3px #2a2a8a;">um</span>
<span style="left:962.00px;top:264.00px;color:#fff;font:bold 8px 'Liberation Sans',sans-serif;clip-path:inset(0 1px 0 0);">1</span>
<span style="left:917.77px;top:261.00px;color:#2a2a8a;font:bold 10px 'Liberation Sans',sans-serif;-webkit-text-stroke:0.3px #2a2a8a;">sm</span>
<span style="left:962.00px;top:283.00px;color:#fff;font:bold 8px 'Liberation Sans',sans-serif;clip-path:inset(0 1px 0 0);">1</span>
<span style="left:919.16px;top:280.00px;color:#2a2a8a;font:bold 10px 'Liberation Sans',sans-serif;-webkit-text-stroke:0.3px #2a2a8a;">co</span>
<span style="left:976.00px;top:127.00px;color:#0000cc;font:bold 10.5px 'Liberation Sans',sans-serif;">KZ</span>
<span style="left:997.00px;top:127.00px;color:#0000cc;font:bold 10.5px 'Liberation Sans',sans-serif;letter-spacing:-0.002px;">Status_Bundesland</span>
<span style="left:980.38px;top:146.00px;color:#000099;font:10.5px 'Liberation Sans',sans-serif;-webkit-text-stroke:0.1px #000099;">v</span>
<span style="left:997.00px;top:146.00px;color:#000099;font:10.5px 'Liberation Sans',sans-serif;-webkit-text-stroke:0.1px #000099;transform:scaleX(0.9225);transform-origin:0 0;">vorkommend</span>
<span style="left:979.50px;top:165.00px;color:#000099;font:10.5px 'Liberation Sans',sans-serif;-webkit-text-stroke:0.1px #000099;">()</span>
<span style="left:997.00px;top:165.00px;color:#000099;font:10.5px 'Liberation Sans',sans-serif;-webkit-text-stroke:0.1px #000099;transform:scaleX(0.8738);transform-origin:0 0;">unbeständig</span>
<span style="left:980.08px;top:184.00px;color:#000099;font:10.5px 'Liberation Sans',sans-serif;-webkit-text-stroke:0.1px #000099;">?</span>
<span style="left:997.00px;top:184.00px;color:#000099;font:10.5px 'Liberation Sans',sans-serif;-webkit-text-stroke:0.1px #000099;transform:scaleX(0.9052);transform-origin:0 0;">Vorkommen fraglich</span>
<span style="left:981.54px;top:203.00px;color:#000099;font:10.5px 'Liberation Sans',sans-serif;-webkit-text-stroke:0.1px #000099;">f</span>
<span style="left:997.00px;top:203.00px;color:#000099;font:10.5px 'Liberation Sans',sans-serif;-webkit-text-stroke:0.1px #000099;transform:scaleX(0.9064);transform-origin:0 0;">fehlt</span>
<span style="left:980.08px;top:222.00px;color:#000099;font:10.5px 'Liberation Sans',sans-serif;-webkit-text-stroke:0.1px #000099;">a</span>
<span style="left:997.00px;top:222.00px;color:#000099;font:10.5px 'Liberation Sans',sans-serif;-webkit-text-stroke:0.1px #000099;transform:scaleX(0.8957);transform-origin:0 0;">ausgestorben</span>
<span style="left:981.54px;top:241.00px;color:#000099;font:10.5px 'Liberation Sans',sans-serif;-webkit-text-stroke:0.1px #000099;">!</span>
<span style="left:997.00px;top:241.00px;color:#000099;font:10.5px 'Liberation Sans',sans-serif;-webkit-text-stroke:0.1px #000099;transform:scaleX(0.8761);transform-origin:0 0;">Abweichung von Standardliste(?)</span>
<span style="left:856.00px;top:382.00px;color:#006600;font:10px 'Liberation Sans',sans-serif;-webkit-text-stroke:0.1px #006600;transform:scaleX(0.9082);transform-origin:0 0;">Datenquelle:</span>
<span style="left:1006.00px;top:393.00px;color:#006600;font:10px 'Liberation Sans',sans-serif;-webkit-text-stroke:0.1px #006600;transform:scaleX(0.9365);transform-origin:0 0;">Manfred A. FISCHER</span>
<span style="left:1037.00px;top:405.00px;color:#006600;font:10px 'Liberation Sans',sans-serif;-webkit-text-stroke:0.1px #006600;transform:scaleX(0.9129);transform-origin:0 0;">Karl OSWALD</span>
<span style="left:1024.00px;top:417.00px;color:#006600;font:10px 'Liberation Sans',sans-serif;-webkit-text-stroke:0.1px #006600;transform:scaleX(0.9273);transform-origin:0 0;">Wolfgang ADLER</span>
<span style="left:929.00px;top:442.00px;color:#006600;font:bold 12px 'Liberation Sans',sans-serif;transform:scaleX(0.9694);transform-origin:0 0;">EXKURSIONSFLORA</span>
<span style="left:931.00px;top:469.00px;color:#006600;font:10px 'Liberation Sans',sans-serif;-webkit-text-stroke:0.1px #006600;transform:scaleX(0.9424);transform-origin:0 0;">für</span>
<span style="left:930.00px;top:493.00px;color:#006600;font:bold 11px 'Liberation Sans',sans-serif;transform:scaleX(0.9705);transform-origin:0 0;">ÖSTERREICH</span>
<span style="left:930.00px;top:507.00px;color:#006600;font:bold 11px 'Liberation Sans',sans-serif;transform:scaleX(0.9496);transform-origin:0 0;">LIECHTENSTEIN</span>
<span style="left:930.00px;top:521.00px;color:#006600;font:bold 11px 'Liberation Sans',sans-serif;letter-spacing:-0.029px;">SÜDTIROL</span>
<span style="left:866.00px;top:547.00px;color:#006600;font:10px 'Liberation Sans',sans-serif;-webkit-text-stroke:0.1px #006600;transform:scaleX(0.8919);transform-origin:0 0;">3. Auflage 2008</span>
<span style="left:866.00px;top:559.00px;color:#006600;font:10px 'Liberation Sans',sans-serif;-webkit-text-stroke:0.1px #006600;transform:scaleX(0.9228);transform-origin:0 0;">Biologiezentrum der Oberösterreichischen Landesmuseen</span>
<span style="left:177.00px;top:853.00px;color:#e8690b;font:bold 11px 'Liberation Sans',sans-serif;letter-spacing:0.244px;">Blühmonate</span>
<span style="left:41.96px;top:909.00px;color:#cc0000;font:bold 12px 'Liberation Sans',sans-serif;">1</span>
<span style="left:102.96px;top:909.00px;color:#cc0000;font:bold 12px 'Liberation Sans',sans-serif;">2</span>
<span style="left:163.96px;top:909.00px;color:#cc0000;font:bold 12px 'Liberation Sans',sans-serif;">3</span>
<span style="left:224.96px;top:909.00px;color:#cc0000;font:bold 12px 'Liberation Sans',sans-serif;">4</span>
<span style="left:285.96px;top:909.00px;color:#cc0000;font:bold 12px 'Liberation Sans',sans-serif;">5</span>
<span style="left:346.96px;top:909.00px;color:#cc0000;font:bold 12px 'Liberation Sans',sans-serif;">6</span>
<span style="left:408.46px;top:909.00px;color:#cc0000;font:bold 12px 'Liberation Sans',sans-serif;">7</span>
<span style="left:469.96px;top:909.00px;color:#cc0000;font:bold 12px 'Liberation Sans',sans-serif;">8</span>
<span style="left:530.96px;top:909.00px;color:#cc0000;font:bold 12px 'Liberation Sans',sans-serif;">9</span>
<span style="left:588.62px;top:909.00px;color:#cc0000;font:bold 12px 'Liberation Sans',sans-serif;">10</span>
<span style="left:649.96px;top:909.00px;color:#cc0000;font:bold 12px 'Liberation Sans',sans-serif;">11</span>
<span style="left:710.62px;top:909.00px;color:#cc0000;font:bold 12px 'Liberation Sans',sans-serif;">12</span>
<span style="left:21.50px;top:1005.00px;color:#000;font:bold 11px 'Liberation Sans',sans-serif;letter-spacing:0.787px;-webkit-text-stroke:0.35px #000;">Start</span>
<span style="left:308.50px;top:1006.00px;color:#000;font:bold 11px 'Liberation Sans',sans-serif;letter-spacing:0.057px;-webkit-text-stroke:0.25px #000;">Microsoft Excel - EFÖL...</span>
<span style="left:470.50px;top:1005.00px;color:#000;font:11px 'Liberation Sans',sans-serif;-webkit-text-stroke:0.1px #000;transform:scaleX(0.9797);transform-origin:0 0;">*E:\EFÖLS2007\Botanisc...</span>
<span style="left:1241.50px;top:1005.00px;color:#000;font:11px 'Liberation Sans',sans-serif;letter-spacing:0.094px;-webkit-text-stroke:0.1px #000;">08:49</span>
</div>
</body></html>
